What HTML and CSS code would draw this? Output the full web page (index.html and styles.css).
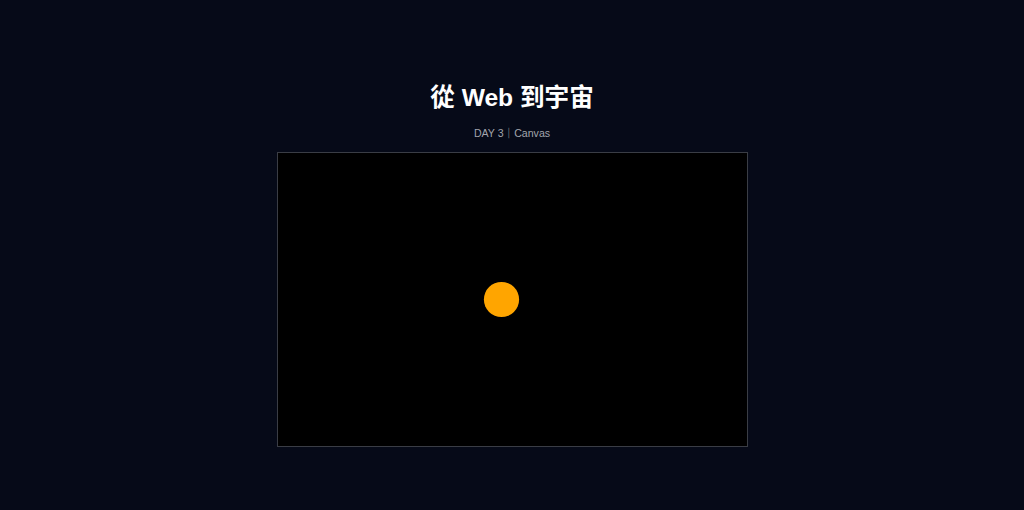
FILE: index.html
```html
<!DOCTYPE html>
<html lang="zh-Hant">
<head>
<meta charset="utf-8">
<title>從 Web 到宇宙</title>
<link rel="stylesheet" href="styles.css">
</head>
<body>
<main class="page">
  <h1 class="title">從 Web 到宇宙</h1>
  <p class="subtitle">DAY 3｜Canvas</p>
  <div class="stage">
    <svg class="scene" width="469" height="293" viewBox="0 0 469 293">
      <circle cx="223.5" cy="146.5" r="17.6" fill="#ffa500"/>
    </svg>
  </div>
</main>
</body>
</html>
```
FILE: styles.css
```css
html, body {
  margin: 0;
  padding: 0;
  background: #060a18;
}
.page {
  display: flex;
  flex-direction: column;
  align-items: center;
  padding-top: 82px;
  font-family: "Liberation Sans", "Noto Sans CJK TC", sans-serif;
}
.title {
  margin: 0;
  font-size: 24.6px;
  line-height: 32px;
  font-weight: 700;
  color: #ffffff;
}
.subtitle {
  margin: 12px 0 0;
  font-size: 10.6px;
  line-height: 14px;
  color: #a2a5ad;
}
.stage {
  margin-top: 12px;
  width: 469px;
  height: 293px;
  background: #000;
  border: 1px solid #3a3d45;
}
.scene {
  display: block;
}
```
